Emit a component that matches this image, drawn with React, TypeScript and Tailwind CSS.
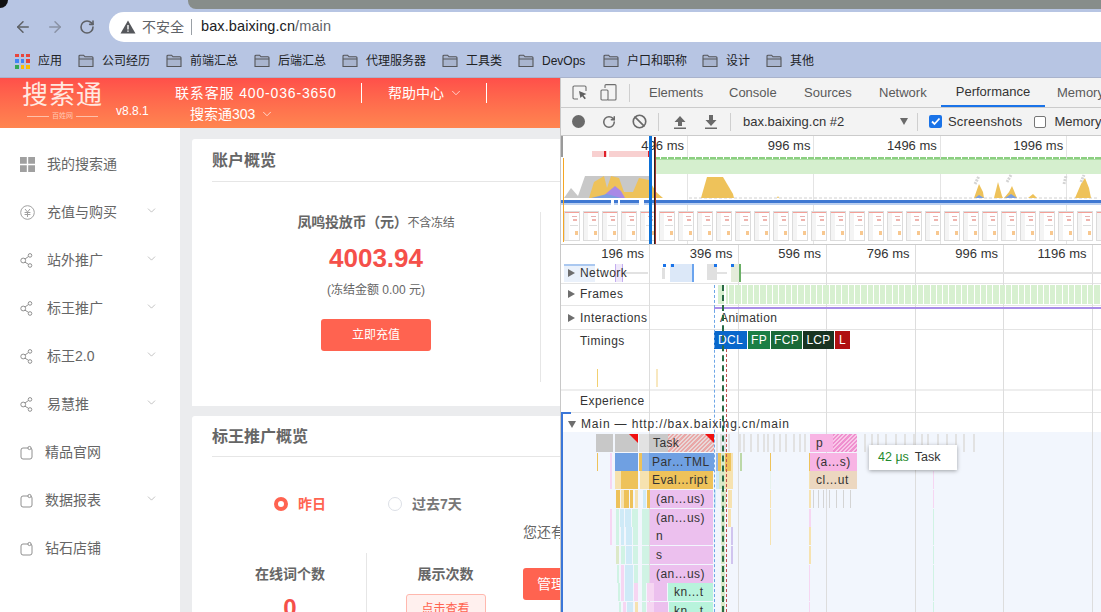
import React from 'react';
import { ArrowLeft, ArrowRight, RotateCw, ChevronDown, Ban } from 'lucide-react';

const FONT = 'font-["Liberation_Sans","Noto_Sans_CJK_SC",sans-serif]';

const bookmarks = [
  { label: '公司经历', w: 'w-[88px]' },
  { label: '前端汇总', w: 'w-[88px]' },
  { label: '后端汇总', w: 'w-[88px]' },
  { label: '代理服务器', w: 'w-[100px]' },
  { label: '工具类', w: 'w-[76px]' },
  { label: 'DevOps', w: 'w-[85px]' },
  { label: '户口和职称', w: 'w-[99px]' },
  { label: '设计', w: 'w-[64px]' },
  { label: '其他', w: 'w-[60px]' },
];

const menu = [
  { label: '我的搜索通', icon: 'grid', arrow: false },
  { label: '充值与购买', icon: 'yuan', arrow: true },
  { label: '站外推广', icon: 'share', arrow: true },
  { label: '标王推广', icon: 'share', arrow: true },
  { label: '标王2.0', icon: 'share', arrow: true },
  { label: '易慧推', icon: 'share', arrow: true },
  { label: '精品官网', icon: 'site', arrow: false },
  { label: '数据报表', icon: 'site', arrow: true },
  { label: '钻石店铺', icon: 'site', arrow: false },
];

const Folder = () => (
  <svg width="16" height="14" viewBox="0 0 16 14" className="shrink-0">
    <path d="M1 12.5V2.2C1 1.6 1.4 1.2 2 1.2h3.6l1.4 1.6h7c.6 0 1 .4 1 1v8.7z" fill="#a9b5cf" stroke="#55565a" strokeWidth="1.1" />
    <path d="M1 5h14" stroke="#55565a" strokeWidth="1" />
  </svg>
);

const MenuIcon = ({ type }: { type: string }) => {
  if (type === 'grid') {
    return (
      <svg width="15" height="15" viewBox="0 0 15 15">
        <path d="M0 0h6.8v6.8H0zM8.2 0H15v6.8H8.2zM0 8.2h6.8V15H0zM8.2 8.2H15V15H8.2z" fill="#a0a0a0" />
      </svg>
    );
  }
  if (type === 'yuan') {
    return (
      <svg width="15" height="15" viewBox="0 0 15 15" fill="none" stroke="#a0a0a0" strokeWidth="1">
        <circle cx="7.5" cy="7.5" r="6.8" />
        <path d="M5 4l2.5 3L10 4M4.6 7.5h5.8M4.6 9.5h5.8M7.5 7v5" />
      </svg>
    );
  }
  if (type === 'share') {
    return (
      <svg width="13" height="15" viewBox="0 0 13 15" fill="none" stroke="#909090" strokeWidth="1">
        <circle cx="3.2" cy="7.5" r="2.4" />
        <circle cx="10" cy="2.4" r="1.8" />
        <circle cx="10" cy="12.5" r="1.8" />
        <path d="M5 6l3.6-2.6M5 9.2l3.6 2.2" />
      </svg>
    );
  }
  return (
    <svg width="13" height="15" viewBox="0 0 13 15" fill="none" stroke="#909090" strokeWidth="1">
      <rect x="1" y="3" width="11" height="11" rx="2" />
      <circle cx="9.5" cy="3" r="1.6" fill="#fff" />
    </svg>
  );
};

const BrowserBar = () => (
  <div className="h-[78px] bg-[#b7c5e3] flex flex-col border-b border-[#a9b3cc] relative">
    <div className="absolute left-0 top-0 w-[8px] h-[8px] bg-[#111] rounded-br-[8px]" />
    <div className="h-[9px] pl-[188px]">
      <div className="h-full bg-[#878d8a] rounded-bl-lg" />
    </div>
    <div className="h-[36px] flex items-center pl-[14px]">
      <ArrowLeft size={18} color="#5e6166" strokeWidth={2} />
      <ArrowRight size={18} color="#8a92a5" strokeWidth={2} className="ml-[14px]" />
      <RotateCw size={16} color="#5e6166" strokeWidth={2.4} className="ml-[15px]" />
      <div className="ml-[14px] flex-1 h-[30px] bg-white rounded-l-[15px] flex items-center pl-[11px]">
        <svg width="16" height="14" viewBox="0 0 16 14">
          <path d="M8 0.5L15.5 13.5H0.5z" fill="#55575b" />
          <path d="M7.3 5h1.4v4.6H7.3zM7.3 10.4h1.4v1.4H7.300z" fill="#fff" />
        </svg>
        <span className="ml-[6px] text-[14px] text-[#5f6368]">不安全</span>
        <div className="ml-[7px] w-px h-[16px] bg-[#9aa0a6]" />
        <span className="ml-[9px] text-[14.5px] text-[#202124] tracking-[0.1px]">
          bax.baixing.cn<span className="text-[#5f6368]">/main</span>
        </span>
      </div>
    </div>
    <div className="flex-1 flex items-center pl-[15px] text-[12px] text-[#202124]">
      <div className="w-[15px] h-[15px] grid grid-cols-3 gap-[2px] shrink-0">
        {['#e8453c', '#e8453c', '#e8453c', '#4285f4', '#4285f4', '#e8453c', '#34a853', '#fbbc05', '#fbbc05'].map((c, i) => (
          <div key={i} style={{ backgroundColor: c }} />
        ))}
      </div>
      <span className="ml-[8px] w-[40px] shrink-0">应用</span>
      <div className="flex">
        {bookmarks.map((b) => (
          <div key={b.label} className={`flex items-center gap-[8px] shrink-0 ${b.w}`}>
            <Folder />
            <span>{b.label}</span>
          </div>
        ))}
      </div>
    </div>
  </div>
);

const PageHeader = () => (
  <div className="h-[50px] bg-gradient-to-b from-[#ff4f4a] to-[#ff8550] flex text-white">
    <div className="w-[175px] shrink-0 flex pl-[22px]">
      <div className="w-[81px] flex flex-col items-center pt-[3px]">
        <span className="text-[26px] leading-[29px] tracking-[1px] font-normal text-[#ffe8e0]">搜索通</span>
        <div className="flex items-center gap-[3px] mt-[2px]">
          <div className="w-[22px] h-px bg-[#ffc0aa]" />
          <span className="text-[7px] leading-[8px] text-[#ffc9b4]">百姓网</span>
          <div className="w-[22px] h-px bg-[#ffc0aa]" />
        </div>
      </div>
      <span className="ml-[13px] mt-[26px] text-[12px] leading-[14px]">v8.8.1</span>
    </div>
    <div className="w-[313px] shrink-0 flex flex-wrap content-start pt-[5px]">
      <span className="w-[187px] text-[14px] leading-[20px] h-[20px] tracking-[0.85px] border-r border-white whitespace-nowrap">联系客服 400-036-3650</span>
      <span className="w-[125px] text-[14px] leading-[20px] h-[20px] pl-[26px] border-r border-white flex items-center gap-[5px]">
        帮助中心 <ChevronDown size={14} strokeWidth={1.2} />
      </span>
      <span className="w-full text-[14px] leading-[20px] pl-[15px] mt-[1px] flex items-center gap-[5px]">
        搜索通303 <ChevronDown size={14} strokeWidth={1.2} />
      </span>
    </div>
  </div>
);

const Sidebar = () => (
  <div className="w-[180px] shrink-0 bg-white pt-[12px] h-full">
    {menu.map((m) => (
      <div key={m.label} className="h-[48px] flex items-center pl-[20px] pr-[22px] text-[14px] text-[#666]">
        <div className={`${m.icon === 'site' ? 'w-[25px]' : 'w-[27px]'} shrink-0 flex`}>
          <MenuIcon type={m.icon} />
        </div>
        <span className="flex-1">{m.label}</span>
        {m.arrow && <ChevronDown size={13} color="#999" strokeWidth={1.1} className="-mt-[3px]" />}
      </div>
    ))}
  </div>
);

const Radio = ({ on, label }: { on: boolean; label: string }) => (
  <div className={`flex items-center h-[20px] text-[14px] font-bold ${on ? 'text-[#ff6350]' : 'text-[#777]'}`}>
    <div className={`w-[14px] h-[14px] rounded-full ${on ? 'border-[4.5px] border-[#ff6350]' : 'border border-[#dcdfe6]'}`} />
    <span className="ml-[10px]">{label}</span>
  </div>
);

const PageMain = () => (
  <div className="w-[380px] shrink-0 bg-[#ebecee] pl-[12px] pt-[11px] overflow-hidden">
    <div className="w-[500px] h-[267px] bg-white rounded-t-[3px] pl-[20px]">
      <div className="h-[43px] border-b border-[#e6e6e6] text-[16px] font-bold text-[#666] leading-[44px]">账户概览</div>
      <div className="flex mt-[30px]">
        <div className="w-[329px] h-[170px] border-r border-[#e6e6e6] flex flex-col items-center">
          <div className="text-[14px] font-bold text-[#666] leading-[20px] tracking-[-0.25px]">
            凤鸣投放币（元）<span className="text-[12px] font-normal">不含冻结</span>
          </div>
          <div className="text-[26px] font-bold text-[#f5504a] mt-[10px] leading-[30px]">4003.94</div>
          <div className="text-[12px] text-[#666] mt-[8px] leading-[18px]">(冻结金额 0.00 元)</div>
          <div className="mt-[20px] w-[110px] h-[32px] bg-[#ff6350] rounded-[3px] text-white text-[12px] flex items-center justify-center">立即充值</div>
        </div>
      </div>
    </div>
    <div className="mt-[10px] w-[500px] h-[300px] bg-white rounded-t-[3px] pl-[20px]">
      <div className="h-[41px] border-b border-[#e6e6e6] text-[16px] font-bold text-[#666] leading-[42px]">标王推广概览</div>
      <div className="flex">
        <div className="w-[311px] shrink-0">
          <div className="flex gap-[62px] pl-[62px] pt-[37px] h-[96px]">
            <Radio on label="昨日" />
            <Radio on={false} label="过去7天" />
          </div>
          <div className="flex">
            <div className="w-[155px] h-[70px] border-r border-[#e6e6e6] flex flex-col items-center pl-[2px] text-[14px] font-bold text-[#666]">
              <span className="mt-[11px] leading-[20px]">在线词个数</span>
              <span className="mt-[10px] text-[24px] leading-[28px] text-[#f5504a]">0</span>
            </div>
            <div className="flex-1 flex flex-col items-center pl-[1px] text-[14px] font-bold text-[#666]">
              <span className="mt-[11px] leading-[20px]">展示次数</span>
              <div className="mt-[10px] w-[80px] h-[30px] bg-[#fff0ee] border border-[#ffb8ae] rounded-[3px] text-[12px] font-normal text-[#ff6350] text-center leading-[28px]">点击查看</div>
            </div>
          </div>
        </div>
        <div className="text-[14px] text-[#666]">
          <div className="pt-[65px] leading-[20px]">您还有</div>
          <div className="mt-[26px] w-[80px] h-[32px] bg-[#ff6350] rounded-[3px] text-white pl-[14px] leading-[32px]">管理</div>
        </div>
      </div>
    </div>
  </div>
);

const tabs = [
  { label: 'Elements', w: 'w-[80px]' },
  { label: 'Console', w: 'w-[75px]' },
  { label: 'Sources', w: 'w-[75px]' },
  { label: 'Network', w: 'w-[76px]' },
];

const DevTabs = () => (
  <div className="h-[30px] bg-[#f3f3f3] border-b border-[#cbcbcb] flex items-center text-[13px] text-[#5a5a5a] pl-[11px] whitespace-nowrap">
    <svg width="16" height="16" viewBox="0 0 16 16" fill="none" className="shrink-0">
      <path d="M6 14H2.2C1.5 14 1 13.5 1 12.8V2.2C1 1.5 1.5 1 2.2 1h10.600c.7 0 1.200.5 1.200 1.200V6" stroke="#6e6e6e" strokeWidth="1.1" />
      <path d="M7 6l7.500 3-3 1.200 2.400 3-1.300 1-2.400-3L8.400 13z" fill="#5f5f5f" />
    </svg>
    <svg width="17" height="17" viewBox="0 0 17 17" fill="none" className="ml-[12px] shrink-0" stroke="#6e6e6e" strokeWidth="1.1">
      <path d="M5 4V1.600C5 1 5.500.6 6 .6h9c.6 0 1 .4 1 1V15c0 .6-.4 1-1 1H8" />
      <rect x="1" y="6" width="7" height="10" rx="1" />
    </svg>
    <div className="ml-[12px] mr-[19px] w-px h-[18px] bg-[#cfcfcf] shrink-0" />
    {tabs.map((t) => (
      <span key={t.label} className={`${t.w} shrink-0`}>{t.label}</span>
    ))}
    <div className="h-full w-[104px] shrink-0 -ml-[14px] border-b-2 border-[#1a73e8] flex items-center justify-center text-[#333]">Performance</div>
    <span className="ml-[12px]">Memory</span>
  </div>
);

const DevToolbar = () => (
  <div className="h-[28px] bg-[#f3f3f3] border-b border-[#cbcbcb] flex items-center text-[13px] text-[#333] pl-[11px] whitespace-nowrap">
    <div className="w-[13px] h-[13px] rounded-full bg-[#6a6a6a] shrink-0" />
    <RotateCw size={14} color="#6a6a6a" strokeWidth={2.6} className="ml-[17px] shrink-0" />
    <Ban size={15} color="#6a6a6a" strokeWidth={2.6} className="ml-[16px] shrink-0" />
    <div className="ml-[11px] w-px h-[18px] bg-[#cfcfcf] shrink-0" />
    <svg width="14" height="14" viewBox="0 0 14 14" className="ml-[14px] shrink-0">
      <path d="M7 1l5.500 6H9v4H5V7H1.500zM1 12.500h12V14H1z" fill="#6a6a6a" />
    </svg>
    <svg width="14" height="14" viewBox="0 0 14 14" className="ml-[17px] shrink-0">
      <path d="M5 0h4v5h3.500L7 11 1.500 5H5zM1 12.500h12V14H1z" fill="#6a6a6a" />
    </svg>
    <div className="ml-[12px] w-px h-[18px] bg-[#cfcfcf] shrink-0" />
    <span className="ml-[12px] w-[157px] shrink-0">bax.baixing.cn #2</span>
    <div className="w-0 h-0 border-x-[4px] border-x-transparent border-t-[7px] border-t-[#6a6a6a] shrink-0" />
    <div className="ml-[9px] w-px h-[18px] bg-[#cfcfcf] shrink-0" />
    <div className="ml-[11px] w-[13px] h-[13px] rounded-[2px] bg-[#1a73e8] flex items-center justify-center shrink-0">
      <svg width="11" height="11" viewBox="0 0 11 11" fill="none" stroke="#fff" strokeWidth="1.8"><path d="M2 5.500l2.500 2.500L9.500 2.500" /></svg>
    </div>
    <span className="ml-[6px] tracking-[0.2px]">Screenshots</span>
    <div className="ml-[12px] w-[12px] h-[12px] rounded-[2px] border border-[#767676] bg-white shrink-0" />
    <span className="ml-[8px]">Memory</span>
  </div>
);

const overviewLabels = ['496 ms', '996 ms', '1496 ms', '1996 ms'];
const thumbs = Array.from({ length: 29 }, (_, i) => i);

const Thumb = () => (
  <div className="w-[16px] h-[30px] shrink-0 bg-white border border-[#dcdcdc] flex flex-col">
    <div className="h-[1px] bg-[#f4a098]" />
    <div className="flex-1 flex">
      <div className="w-[4px] h-full bg-[#f4f4f4]" />
      <div className="flex-1">
        <div className="mt-[3px] ml-[3px] w-[5px] h-[1px] bg-[#e8b0b0]" />
        <div className="mt-[2px] ml-[4px] w-[4px] h-[2px] bg-[#efb4ae]" />
        <div className="mt-[4px] ml-[1px] w-[8px] h-px bg-[#dddddd]" />
        <div className="mt-[5px] ml-[6px] w-[3px] h-[4px] bg-[#f8c890]" />
      </div>
    </div>
  </div>
);

const Overview = () => (
  <div className="h-[109px] bg-white border-b border-[#cbcbcb] relative overflow-hidden">
    {[126, 252, 379, 505].map((x) => (
      <div key={x} className="absolute top-0 bottom-0 w-px bg-[#e4e4e4]" style={{ left: x }} />
    ))}
    {overviewLabels.map((l, i) => (
      <span key={l} className="absolute top-[1px] text-[13px] leading-[18px] text-[#333] text-right w-[60px]" style={{ left: 63 + i * 126.4 }}>{l}</span>
    ))}
    <div className="absolute left-0 top-0 w-[2px] h-[21px] bg-[#9a9a9a]" />
    <div className="absolute left-[31px] top-[15px] w-[58px] h-[6px] bg-[#f8d0d0]" />
    <div className="absolute left-[43px] top-[15px] w-[2px] h-[6px] bg-[#e0202a]" />
    <div className="absolute left-[46px] top-[15px] w-[2px] h-[6px] bg-white" />
    <div className="absolute left-[87px] top-[15px] w-[2px] h-[6px] bg-[#e0202a]" />
    <div className="absolute left-[93px] right-0 top-[23px] h-[15px] bg-[#d5efce]" />
    <div className="absolute left-[93px] right-0 top-[21px] h-[2px] bg-[repeating-linear-gradient(90deg,#8bcf80_0_6px,transparent_6px_7px)]" />
    <div className="absolute left-[93px] right-0 top-[23px] h-px bg-[#a8dca0]" />
    <svg className="absolute left-0 top-[38px]" width="541" height="25" viewBox="0 0 541 25">
      <path d="M3 24L10 14 17 22 24 2H90V12L100 24z" fill="#c8c8c8" />
      <path d="M128 24h410" stroke="#d0d0d0" strokeWidth="1" strokeDasharray="3 2" />
      <path d="M28 24L33 8 43 2 46 14 50 2 58 4 63 18 72 18 78 4 88 6 95 18 102 24z" fill="#eec25a" />
      <path d="M140 24L146 3H162L172 20 173 24z" fill="#eec25a" />
      <path d="M212 24h4l1-2 1 2zM413 24L418 10 422 18 423 24zM433 24L437 8 441 22 442 24zM443 24L448 18 451 12 456 24zM467 24L472 20 476 24zM514 24L520 10 524 4 528 14 530 24z" fill="#eec25a" />
      <path d="M40 24L48 17 54 12 60 17 64 24z" fill="#a889e6" />
      <path d="M30 24L46 20 60 24zM414 24L418 21 423 24zM444 24L450 20 456 24z" fill="#7b9fe0" />
      <path d="M414 10L418 2M520 8L523 1M446 8L450 1M503 10L505 2" stroke="#d4d4d4" strokeWidth="3" strokeDasharray="2 1" />
    </svg>
    <div className="absolute left-0 right-0 top-[64px] h-[3px] bg-[#3f78d2]" />
    <div className="absolute left-0 right-0 top-[67px] h-[2px] bg-[#bcd0f0]" />
    <div className="absolute left-[50px] top-[64px] w-[3px] h-[5px] bg-white" />
    <div className="absolute left-[57px] top-[64px] w-[2px] h-[5px] bg-white" />
    <div className="absolute left-[78px] top-[64px] w-[5px] h-[5px] bg-white" />
    <div className="absolute left-[3px] top-[75px] flex gap-[3px]">
      {thumbs.map((i) => (
        <Thumb key={i} />
      ))}
    </div>
    <div className="absolute left-[2px] top-[22px] bottom-[2px] w-[1px] bg-[#f5a623]" />
    <div className="absolute left-[88px] top-0 bottom-0 w-[2.5px] bg-[#0b6fd6]" />
    <div className="absolute left-[93px] top-[1px] bottom-0 w-px bg-[#222]" />
    <div className="absolute left-[94px] top-[1px] bottom-0 w-px bg-[#a03030]" />
  </div>
);

const grid = [88, 176.6, 265.2, 353.8, 442.4, 531];
const rulerLabels = ['196 ms', '396 ms', '596 ms', '796 ms', '996 ms', '1196 ms'];

type Bar = [number, number, number, string];

const hatch = 'bg-[repeating-linear-gradient(135deg,#e9a8a8_0_1.5px,#e8d8d8_1.5px_3px)]';
const hatchPink = 'bg-[repeating-linear-gradient(135deg,#ef90cf_0_1.5px,#f8c8e8_1.5px_3px)]';

const Y = '#eec25a';
const PY = '#f6e2b0';
const PK = '#f6d6f2';
const MT = '#d0f3e4';
const BL = '#cfeaf7';
const GR = '#dce9c8';

const fineBars: Bar[] = [
  [36, 1, 1, Y], [49, 1, 2, PK], [78, 1, 3, Y], [81, 1, 7, '#93b8ea'], [155, 1, 2, '#93b8ea'], [157, 1, 3, Y], [160, 1, 4, GR], [164, 1, 6, Y], [170, 1, 2, PY], [179, 1, 2, '#bcd8a8'], [209, 1, 1, Y], [248, 1, 1, Y],
  [49, 2, 2, PK], [54, 2, 6, PY], [60, 2, 6, Y], [66, 2, 11, Y], [79, 2, 9, PY], [155, 2, 3, BL], [158, 2, 6, GR], [164, 2, 8, PY], [209, 2, 1, '#e6f2ee'], [248, 2, 1, PY], [372, 2, 1, PK],
  [55, 3, 4, Y], [60, 3, 3, PY], [63, 3, 5, Y], [69, 3, 3, Y], [74, 3, 3, PY], [82, 3, 3, BL], [86, 3, 3, Y], [153, 3, 2, BL], [160, 3, 5, GR], [167, 3, 4, PY], [209, 3, 1, PY], [248, 3, 2, PY], [372, 3, 1, PK],
  [49, 4, 2, PK], [55, 4, 3, MT], [59, 4, 4, BL], [64, 4, 6, BL], [71, 4, 6, MT], [81, 4, 7, MT], [160, 4, 4, GR], [167, 4, 3, PY], [209, 4, 1, PY], [248, 4, 2, PK], [372, 4, 1, MT],
  [49, 5, 2, PK], [55, 5, 3, MT], [60, 5, 3, BL], [65, 5, 6, BL], [72, 5, 5, MT], [81, 5, 7, MT], [160, 5, 4, GR], [170, 5, 2, '#d0c4ef'], [209, 5, 1, PY], [248, 5, 2, PY], [372, 5, 1, MT],
  [55, 6, 3, GR], [60, 6, 4, MT], [65, 6, 6, BL], [72, 6, 5, MT], [81, 6, 7, MT], [160, 6, 4, GR], [170, 6, 2, '#d0c4ef'], [248, 6, 2, PY], [372, 6, 1, MT],
  [56, 7, 2, MT], [60, 7, 3, PK], [64, 7, 8, BL], [73, 7, 4, MT], [81, 7, 7, MT], [160, 7, 4, GR], [248, 7, 1, PK], [372, 7, 1, MT],
  [57, 8, 2, MT], [60, 8, 3, PK], [64, 8, 8, BL], [73, 8, 4, PK], [81, 8, 4, MT], [86, 8, 7, PK], [160, 8, 4, GR], [248, 8, 1, PK], [372, 8, 1, MT],
  [58, 9, 2, MT], [62, 9, 3, PK], [66, 9, 6, BL], [74, 9, 3, PY], [81, 9, 4, MT], [86, 9, 7, PK], [160, 9, 4, GR], [248, 9, 1, PK], [372, 9, 1, MT],
];

const named = [
  { x: 89, r: 3, w: 63, c: '#ecc0ee', t: '(an…us)', pl: 6 },
  { x: 89, r: 4, w: 63, c: '#ecc0ee', t: '(an…us)', pl: 6 },
  { x: 89, r: 5, w: 63, c: '#ecc0ee', t: 'n', pl: 6 },
  { x: 89, r: 6, w: 63, c: '#ecc0ee', t: 's', pl: 6 },
  { x: 89, r: 7, w: 63, c: '#ecc0ee', t: '(an…us)', pl: 6 },
  { x: 107, r: 8, w: 45, c: '#b8f3dc', t: 'kn…t', pl: 6 },
  { x: 108, r: 9, w: 44, c: '#b8f3dc', t: 'kn…t', pl: 5 },
  { x: 88, r: 1, w: 65, c: '#6fa0e2', t: 'Par…TML', pl: 3 },
  { x: 88, r: 2, w: 64, c: '#eec25a', t: 'Eval…ript', pl: 3 },
  { x: 249, r: 1, w: 47, c: '#f8b4e4', t: '(a…s)', pl: 6 },
  { x: 249, r: 2, w: 47, c: '#ecd7c0', t: 'cl…ut', pl: 6 },
];

const rowTop = (r: number) => r * 18.67;

const taskLines = [155, 159, 163, 167, 178, 182, 189, 196, 202, 206, 212, 218, 224, 232, 238, 243, 303, 310, 316, 324, 334, 343, 352, 360, 366, 376, 385, 394, 402, 412];
const subLines = [252, 257, 262, 268, 275, 282, 289];

const TrackLabel = ({ text, arrow, top, wide }: { text: string; arrow?: 'right' | 'down'; top: number; wide?: boolean }) => (
  <div className={`absolute left-[7px] flex items-center h-[18px] text-[12px] text-[#333] ${wide ? 'tracking-[0.85px]' : 'tracking-[0.45px]'}`} style={{ top }}>
    {arrow === 'right' && <div className="w-0 h-0 border-y-[4.5px] border-y-transparent border-l-[7px] border-l-[#6e6e6e]" />}
    {arrow === 'down' && <div className="w-0 h-0 border-x-[4.5px] border-x-transparent border-t-[7px] border-t-[#6e6e6e]" />}
    <span className={arrow ? 'ml-[5px]' : 'ml-[12px]'}>{text}</span>
  </div>
);

const frameBlocks = Array.from({ length: 60 }, (_, i) => i);

const Timeline = () => (
  <div className="flex-1 relative bg-white overflow-hidden">
    {/* ruler */}
    <div className="h-[17px] relative">
      {rulerLabels.map((l, i) => (
        <span key={l} className="absolute top-0 text-[13px] leading-[18px] text-[#333] text-right w-[60px]" style={{ left: 23 + i * 88.5 }}>{l}</span>
      ))}
    </div>
    {/* flame chart background */}
    <div className="absolute left-0 right-0 top-[187px] bottom-0 bg-[#f2f6fd]" />
    {/* row lines */}
    {[38, 60, 84, 144, 167].map((y) => (
      <div key={y} className={`absolute left-0 right-0 ${y === 144 ? 'h-[2px] bg-[#eeeeee]' : 'h-px bg-[#e4e4e4]'}`} style={{ top: y }} />
    ))}
    <div className="absolute left-[2px] right-0 top-[168px] h-[19px] bg-white" />
    {grid.map((x) => (
      <div key={x} className="absolute top-0 bottom-0 w-px bg-[#dddddd]" style={{ left: x }} />
    ))}
    {/* network */}
    <div className="absolute left-[3px] top-[19px] w-[31px] h-[18px] bg-[#eaf1fb] border-t-2 border-[#aac8f0]" />
    <div className="absolute left-[54px] top-[19px] w-[8px] h-[18px] bg-[#efe8fa] border-x border-[#c4aef0]" />
    <div className="absolute left-[62px] top-[27px] w-[25px] h-[2px] bg-[#e2e2e2]" />
    <div className="absolute left-[101px] top-[23px] w-[3px] h-[11px] bg-[#e0e0e0]" />
    <div className="absolute left-[109px] top-[19px] w-[24px] h-[18px] bg-[#dce8f8] border-r-2 border-[#6ba4ee]" />
    <div className="absolute left-[102px] top-[19px] w-[3px] h-[3px] bg-[#1a73e8]" />
    <div className="absolute left-[110px] top-[19px] w-[3px] h-[3px] bg-[#1a73e8]" />
    <div className="absolute left-[146px] top-[19px] w-[10px] h-[16px] bg-[#e0e0e0]" />
    <div className="absolute left-[153px] top-[19px] w-[3px] h-[3px] bg-[#1a73e8]" />
    <div className="absolute left-[156px] top-[27px] w-[10px] h-[2px] bg-[#e2e2e2]" />
    <div className="absolute left-[170px] top-[19px] w-[10px] h-[18px] bg-[#e4ecda] border-r-2 border-[#6aaf66]" />
    <div className="absolute left-[170px] top-[19px] w-[3px] h-[3px] bg-[#1a73e8]" />
    <div className="absolute left-[180px] right-0 top-[27px] h-[2px] bg-[#e2e2e2]" />
    {/* frames */}
    <div className="absolute left-[157px] top-[40px] w-[6px] h-[19px] bg-[#d7f0d0]" />
    <div className="absolute left-[165px] top-[40px] flex gap-px">
      {frameBlocks.map((i) => (
        <div key={i} className={`${i === 0 ? 'w-[2px]' : 'w-[5.3px]'} h-[19px] bg-[#d7f0d0]`} />
      ))}
    </div>
    {/* interactions */}
    <div className="absolute left-[153px] right-0 top-[62px] h-[2px] bg-[#a98de8]" />
    <div className="absolute left-[153px] top-[62px] h-[5px] w-px bg-[#a98de8]" />
    <span className="absolute left-[159px] top-[64px] text-[12px] leading-[18px] text-[#333] tracking-[0.45px]">Animation</span>
    {/* timings */}
    <div className="absolute left-[153px] top-[86px] h-[18px] flex gap-px text-[12px] leading-[18px] text-white text-center tracking-[0.3px]">
      <div className="w-[33px] bg-[#0867cb]">DCL</div>
      <div className="w-[22px] bg-[#1a7f45]">FP</div>
      <div className="w-[31px] bg-[#1a6937]">FCP</div>
      <div className="w-[31px] bg-[#1a3422]">LCP</div>
      <div className="w-[15px] bg-[#b01010]">L</div>
    </div>
    <div className="absolute left-[36px] top-[124px] w-px h-[18px] bg-[#f2d070]" />
    <div className="absolute left-[95px] top-[124px] w-[2px] h-[18px] bg-[#f8e8c0]" />
    {/* flame chart */}
    <div className="absolute left-0 right-0 top-[189px] bottom-0">
      <div className="absolute top-0 left-[35px] w-[17px] h-[18px] bg-[#c8c8c8]" />
      <div className="absolute top-0 left-[54px] w-[23px] h-[18px] bg-[#c8c8c8]" />
      <div className="absolute top-0 left-[78px] w-[10px] h-[18px] bg-[#e2e2e2]" />
      <div className="absolute top-0 left-[88px] w-[65px] h-[18px] bg-[#c8c8c8]" />
      <div className={`absolute top-0 left-[107px] w-[46px] h-[18px] ${hatch}`} />
      <span className="absolute top-0 left-[92px] text-[12px] leading-[19px] text-[#333] tracking-[0.4px]">Task</span>
      {[77, 153].map((x) => (
        <svg key={x} className="absolute top-0" width="9" height="9" style={{ left: x - 9 }}><path d="M0 0h9v9z" fill="#f01010" /></svg>
      ))}
      {taskLines.map((x) => (
        <div key={x} className="absolute top-0 w-[1.5px] h-[18px] bg-[#e2e2e2]" style={{ left: x }} />
      ))}
      {subLines.map((x) => (
        <div key={x} className="absolute w-px h-[18px] bg-[#d4d4d4]" style={{ left: x, top: rowTop(3) }} />
      ))}
      <div className="absolute top-0 left-[249px] w-[47px] h-[18px] bg-[#f8b4e4] text-[12px] leading-[19px] pl-[6px] text-[#333]">p</div>
      <div className={`absolute top-0 left-[272px] w-[24px] h-[18px] ${hatchPink}`} />
      <div className="absolute left-[54px] w-[23px] h-[18px] bg-[#6fa0e2]" style={{ top: rowTop(1) }} />
      {fineBars.map(([x, r, w, c], i) => (
        <div key={i} className="absolute h-[18px]" style={{ left: x, top: rowTop(r), width: w, backgroundColor: c }} />
      ))}
      {named.map((n) => (
        <div key={`${n.x}-${n.r}`} className="absolute h-[18px] text-[12px] leading-[19px] text-[#333] tracking-[0.4px] whitespace-nowrap" style={{ left: n.x, top: rowTop(n.r), width: n.w, paddingLeft: n.pl, backgroundColor: n.c }}>{n.t}</div>
      ))}
      <div className="absolute left-[93px] w-[13px] h-[18px] bg-[#ecc0ee]" style={{ top: rowTop(8) }} />
      <div className="absolute left-[93px] w-[14px] h-[18px] bg-[#ecc0ee]" style={{ top: rowTop(9) }} />
    </div>
    {/* timing markers */}
    <div className="absolute left-[153px] top-[40px] bottom-0 border-l border-dashed border-[#6ea6e6]" />
    <div className="absolute left-[161px] top-[40px] bottom-0 border-l-2 border-dashed border-[#2a6b45]" />
    <div className="absolute left-[165px] top-[104px] bottom-0 border-l border-dashed border-[#c05050]" />
    <TrackLabel text="Network" arrow="right" top={19} />
    <TrackLabel text="Frames" arrow="right" top={40} />
    <TrackLabel text="Interactions" arrow="right" top={64} />
    <TrackLabel text="Timings" top={87} />
    <TrackLabel text="Experience" top={147} />
    <TrackLabel text="Main — http://bax.baixing.cn/main" arrow="down" top={170} wide />
    {/* selected track edge */}
    <div className="absolute left-0 top-[167px] bottom-0 w-[2px] bg-[#3a76d8]" />
    <div className="absolute left-0 top-[167px] w-[10px] h-[2px] bg-[#3a76d8]" />
    {/* tooltip */}
    <div className="absolute left-[308px] top-[200px] w-[88px] h-[25px] bg-white shadow-[0_1px_4px_rgba(0,0,0,0.35)] flex items-center pl-[9px] text-[12.5px] text-[#333]">
      <span className="text-[#1f8a2e]">42 µs</span>
      <span className="ml-[6px]">Task</span>
    </div>
  </div>
);

const DevTools = () => (
  <div className="w-[541px] shrink-0 flex flex-col border-l border-[#c8c8c8] overflow-hidden">
    <DevTabs />
    <DevToolbar />
    <Overview />
    <Timeline />
  </div>
);

const App: React.FC = () => {
  return (
    <div className={`w-[1101px] h-[612px] overflow-hidden flex flex-col bg-white ${FONT}`}>
      <BrowserBar />
      <div className="flex-1 flex min-h-0">
        <div className="w-[560px] shrink-0 flex flex-col overflow-hidden">
          <PageHeader />
          <div className="flex-1 flex min-h-0">
            <Sidebar />
            <PageMain />
          </div>
        </div>
        <DevTools />
      </div>
    </div>
  );
};

export default App;
